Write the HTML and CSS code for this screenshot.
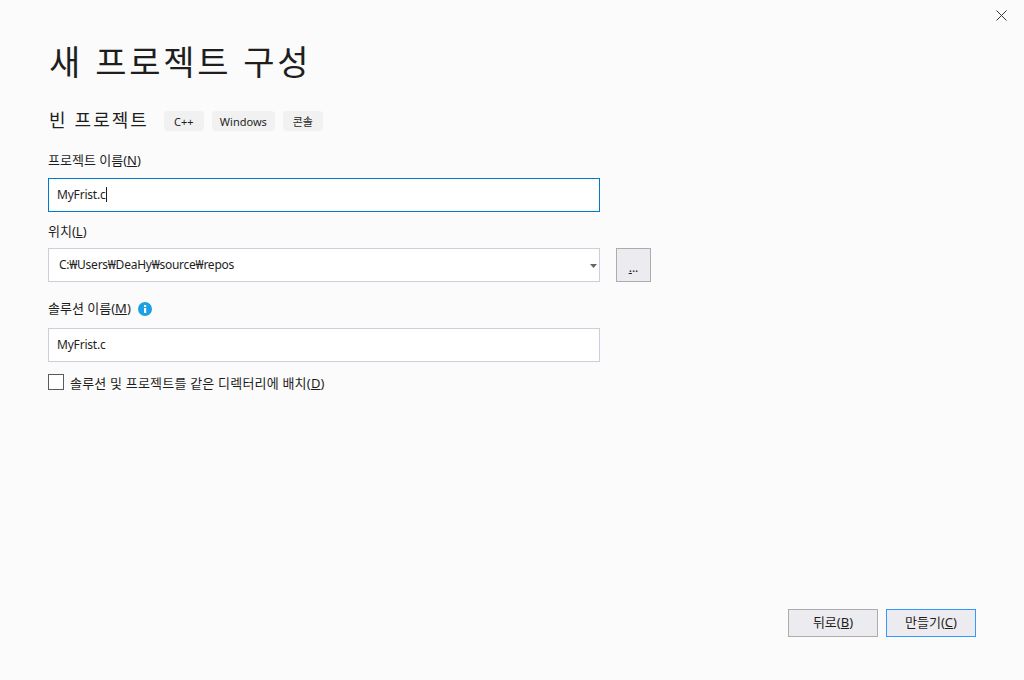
FILE: index.html
```html
<!DOCTYPE html>
<html lang="ko">
<head>
<meta charset="utf-8">
<title>새 프로젝트 구성</title>
<link rel="stylesheet" href="styles.css">
</head>
<body>
<div class="dialog">
  <button class="close" aria-label="닫기">
    <svg width="11" height="11" viewBox="0 0 11 11"><path d="M.5.5l10 10M10.5.5l-10 10" stroke="#333" stroke-width="1" fill="none"/></svg>
  </button>
  <main class="content">
    <h1 class="title">새 프로젝트 구성</h1>
    <div class="subhead">
      <h2 class="subtitle">빈 프로젝트</h2>
      <ul class="tags">
        <li class="tag">C++</li>
        <li class="tag">Windows</li>
        <li class="tag">콘솔</li>
      </ul>
    </div>
    <div class="field field-name">
      <label class="label">프로젝트 이름(<u>N</u>)</label>
      <div class="input input-focus"><span class="value">MyFrist.c</span><span class="caret"></span></div>
    </div>
    <div class="field field-loc">
      <label class="label">위치(<u>L</u>)</label>
      <div class="loc-row">
        <div class="input input-combo"><span class="path">C:₩Users₩DeaHy₩source₩repos</span>
          <svg class="arrow" width="7" height="4" viewBox="0 0 7 4"><path d="M0 0h7L3.5 4z" fill="#666"/></svg>
        </div>
        <button class="browse"><span class="browse-dots"><u>.</u>..</span></button>
      </div>
    </div>
    <div class="field field-sol">
      <div class="label-row">
        <label class="label">솔루션 이름(<u>M</u>)</label>
        <svg class="info" width="14" height="14" viewBox="0 0 14 14"><circle cx="7" cy="7" r="7" fill="#1ba1e2"/><rect x="6" y="6" width="2.2" height="5" fill="#fff"/><rect x="6" y="3" width="2.2" height="2" fill="#fff"/></svg>
      </div>
      <div class="input"><span class="value">MyFrist.c</span></div>
    </div>
    <div class="check-row">
      <span class="checkbox"></span>
      <span class="check-label">솔루션 및 프로젝트를 같은 디렉터리에 배치(<u>D</u>)</span>
    </div>
  </main>
  <footer class="footer">
    <button class="btn">뒤로(<u>B</u>)</button>
    <button class="btn btn-primary">만들기(<u>C</u>)</button>
  </footer>
</div>
</body>
</html>
```

FILE: styles.css
```css
* { box-sizing: border-box; }
html, body { margin: 0; height: 100%; }
body {
  background: #fbfbfb;
  color: #1e1e1e;
  font-family: "Noto Sans", "Noto Sans CJK KR", sans-serif;
  font-size: 12px;
  overflow: hidden;
}
.dialog {
  position: relative;
  height: 680px;
  display: flex;
  flex-direction: column;
  justify-content: space-between;
}
.close {
  position: absolute;
  top: 10px;
  right: 17px;
  width: 11px;
  height: 11px;
  padding: 0;
  border: 0;
  background: none;
  line-height: 0;
}
.content { padding: 38px 0 0 48px; width: 680px; }
.title {
  margin: 0;
  padding-left: 1px;
  font-size: 34px;
  font-weight: 400;
  line-height: 46px;
  letter-spacing: 2.7px;
  font-family: "Noto Sans CJK KR", sans-serif;
}
.subhead {
  display: flex;
  align-items: center;
  gap: 15px;
  margin-top: 24px;
  height: 26px;
}
.subtitle {
  margin: 0 0 4px 1px;
  font-size: 18px;
  font-weight: 400;
  letter-spacing: 2px;
  line-height: 26px;
  font-family: "Noto Sans CJK KR", sans-serif;
}
.tags { display: flex; gap: 8px; margin: 0; padding: 0; list-style: none; }
.tag {
  height: 20px;
  padding: 0 8px;
  min-width: 40px;
  text-align: center;
  background: #f1f1f1;
  border-radius: 4px;
  font-size: 11px;
  line-height: 21px;
}
.field-name { margin-top: 18px; }
.field-name .label { margin-bottom: 9px; }
.field-loc { margin-top: 11px; }
.field-sol { margin-top: 18px; }
.label { display: block; font-size: 13px; line-height: 17px; margin-bottom: 8px; }
.label-row { display: flex; align-items: flex-start; gap: 7px; padding-bottom: 3px; }
.info { margin-top: 2px; }
.input {
  width: 552px;
  height: 34px;
  flex: none;
  border: 1px solid #ccceDB;
  background: #fff;
  display: flex;
  align-items: center;
  padding: 0 0 2px 8px;
  font-size: 12px;
  position: relative;
}
.value { letter-spacing: -.2px; }
.input-focus { border-color: #007acc; }
.input-combo { padding-left: 10px; }
.path { letter-spacing: -.25px; }
.caret { display: inline-block; width: 1px; height: 15px; background: #1e1e1e; }
.arrow { position: absolute; right: 2px; top: 15px; }
.loc-row { display: flex; gap: 16px; }
.browse {
  width: 35px;
  height: 34px;
  flex: none;
  border: 1px solid #acacac;
  background: #ececf0;
  padding: 0;
  font-size: 12px;
  color: #1e1e1e;
  font-family: inherit;
}
.browse-dots { display: block; margin-top: 5px; line-height: 12px; }
.check-row { display: flex; align-items: center; gap: 6px; margin-top: 11px; height: 18px; }
.checkbox { width: 16px; height: 16px; border: 1px solid #5a5a5a; background: #fff; }
.check-label { font-size: 13px; letter-spacing: .2px; }
.footer {
  display: flex;
  justify-content: flex-end;
  gap: 8px;
  padding: 0 48px 43px 0;
}
.btn {
  width: 90px;
  height: 28px;
  border: 1px solid #acacac;
  background: #ececf0;
  padding: 0 0 3px;
  font-family: inherit;
  font-size: 13px;
  color: #1e1e1e;
}
.btn-primary { border-color: #3399ff; }
```
